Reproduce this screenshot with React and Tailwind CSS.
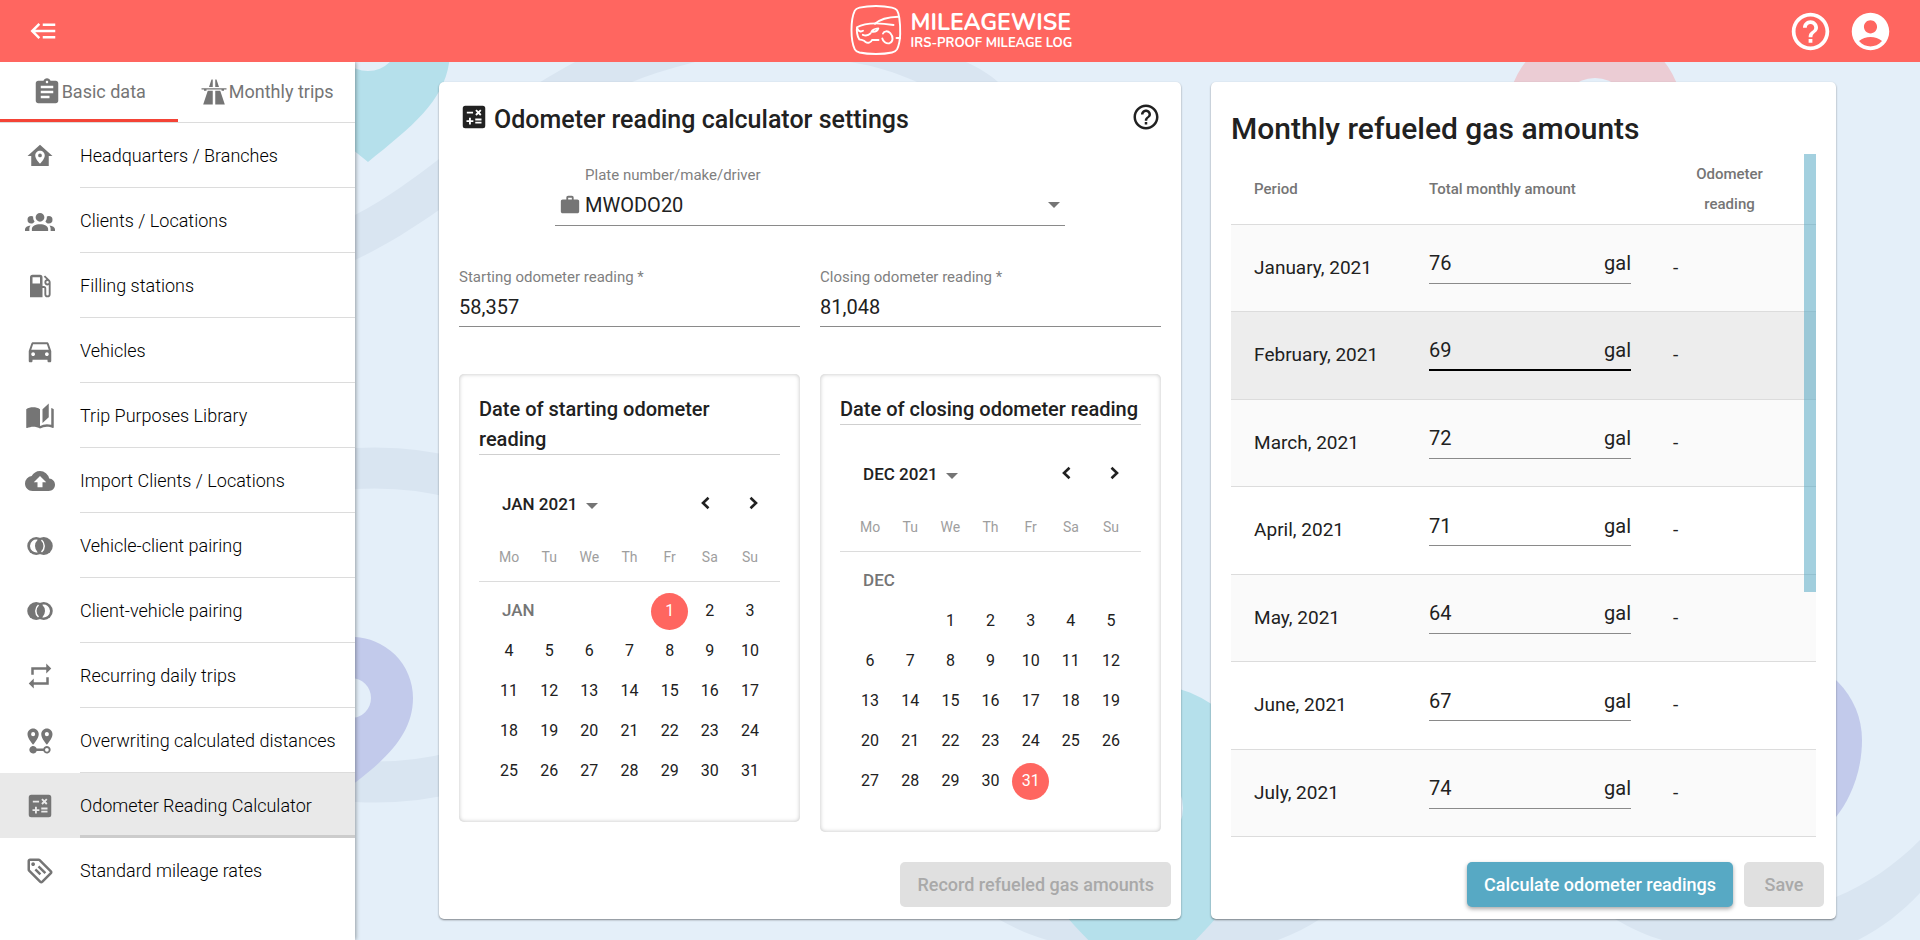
import React, { useState } from "react";
import {
  MdAccountCircle,
  MdAssignment,
  MdCloudUpload,
  MdDirectionsCar,
  MdHelpOutline,
  MdRepeat,
  MdWork,
} from "react-icons/md";

const PATHS = {
  backburger:
    "M5,13L9,17L7.6,18.42L1.18,12L7.6,5.58L9,7L5,11H21V13H5M21,6V8H11V6H21M21,16V18H11V16H21Z",
  highway:
    "M10,2L8,8H11V2H10M13,2V8H16L14,2H13M2,9V10H4V11H6V10H18L18.06,11H20V10H22V9H2M7,11L3.34,22H11V11H7M13,11V22H20.66L17,11H13Z",
  homePin:
    "M12,3L2,12H5V20H19V12H22L12,3M12,7.7C14.1,7.7 15.8,9.4 15.8,11.5C15.8,14.5 12,18 12,18C12,18 8.2,14.5 8.2,11.5C8.2,9.4 9.9,7.7 12,7.7M12,10A1.5,1.5 0 0,0 10.5,11.5A1.5,1.5 0 0,0 12,13A1.5,1.5 0 0,0 13.5,11.5A1.5,1.5 0 0,0 12,10Z",
  group:
    "M12,5.5A3.5,3.5 0 0,1 15.5,9A3.5,3.5 0 0,1 12,12.5A3.5,3.5 0 0,1 8.5,9A3.5,3.5 0 0,1 12,5.5M5,8C5.56,8 6.08,8.15 6.53,8.42C6.38,9.85 6.8,11.27 7.66,12.38C7.16,13.34 6.16,14 5,14A3,3 0 0,1 2,11A3,3 0 0,1 5,8M19,8A3,3 0 0,1 22,11A3,3 0 0,1 19,14C17.84,14 16.84,13.34 16.34,12.38C17.2,11.27 17.62,9.85 17.47,8.42C17.92,8.15 18.44,8 19,8M5.5,18.25C5.5,16.18 8.41,14.5 12,14.5C15.59,14.5 18.5,16.18 18.5,18.25V20H5.5V18.25M0,20V18.5C0,17.11 1.89,15.94 4.45,15.6C3.86,16.28 3.5,17.22 3.5,18.25V20H0M24,20H20.5V18.25C20.5,17.22 20.14,16.28 19.55,15.6C22.11,15.94 24,17.11 24,18.5V20Z",
  gas:
    "M18,10A1,1 0 0,1 17,9A1,1 0 0,1 18,8A1,1 0 0,1 19,9A1,1 0 0,1 18,10M12,10H6V5H12M19.77,7.23L19.78,7.22L16.06,3.5L15,4.56L17.11,6.67C16.17,7.03 15.5,7.93 15.5,9A2.5,2.5 0 0,0 18,11.5C18.36,11.5 18.69,11.42 19,11.29V18.5A1,1 0 0,1 18,19.5A1,1 0 0,1 17,18.5V14A2,2 0 0,0 15,12H14V5A2,2 0 0,0 12,3H6A2,2 0 0,0 4,5V21H14V13.5H15.5V18.5A2.5,2.5 0 0,0 18,21A2.5,2.5 0 0,0 20.5,18.5V9C20.5,8.31 20.22,7.68 19.77,7.23Z",
  book:
    "M19 2L14 6.5V17.5L19 13V2M6.5 5C4.55 5 2.45 5.4 1 6.5V21.16C1 21.41 1.25 21.66 1.5 21.66C1.6 21.66 1.65 21.59 1.75 21.59C3.1 20.94 5.05 20.5 6.5 20.5C8.45 20.5 10.55 20.9 12 22C13.35 21.15 15.8 20.5 17.5 20.5C19.15 20.5 20.85 20.81 22.25 21.56C22.35 21.61 22.4 21.59 22.5 21.59C22.75 21.59 23 21.34 23 21.09V6.5C22.4 6.05 21.75 5.75 21 5.5V19C19.9 18.65 18.7 18.5 17.5 18.5C15.8 18.5 13.35 19.15 12 20V6.5C10.55 5.4 8.45 5 6.5 5Z",
  pinDistance:
    "M6.5,8.11C5.61,8.11 4.89,7.39 4.89,6.5A1.61,1.61 0 0,1 6.5,4.89C7.39,4.89 8.11,5.61 8.11,6.5A1.61,1.61 0 0,1 6.5,8.11M6.5,2C4,2 2,4 2,6.5C2,9.87 6.5,14.86 6.5,14.86C6.5,14.86 11,9.87 11,6.5C11,4 9,2 6.5,2M17.5,8.11A1.61,1.61 0 0,1 15.89,6.5C15.89,5.61 16.61,4.89 17.5,4.89C18.39,4.89 19.11,5.61 19.11,6.5A1.61,1.61 0 0,1 17.5,8.11M17.5,2C15,2 13,4 13,6.5C13,9.87 17.5,14.86 17.5,14.86C17.5,14.86 22,9.87 22,6.5C22,4 20,2 17.5,2M17.5,16C16.23,16 15.1,16.8 14.68,18H9.32C8.77,16.44 7.05,15.62 5.5,16.17C3.93,16.72 3.11,18.44 3.66,20C4.22,21.56 5.93,22.38 7.5,21.83C8.35,21.53 9,20.85 9.32,20H14.69C15.24,21.56 16.96,22.38 18.5,21.83C20.08,21.28 20.9,19.56 20.35,18C19.92,16.8 18.78,16 17.5,16M17.5,20.5A1.5,1.5 0 0,1 16,19A1.5,1.5 0 0,1 17.5,17.5A1.5,1.5 0 0,1 19,19A1.5,1.5 0 0,1 17.5,20.5Z",
  calculator:
    "M19,3H5A2,2 0 0,0 3,5V19A2,2 0 0,0 5,21H19A2,2 0 0,0 21,19V5A2,2 0 0,0 19,3M13.03,7.06L14.09,6L15.5,7.41L16.91,6L17.97,7.06L16.56,8.47L17.97,9.88L16.91,10.94L15.5,9.53L14.09,10.94L13.03,9.88L14.44,8.47L13.03,7.06M6.25,7.72H11.25V9.22H6.25V7.72M11.5,16H9.5V18H8V16H6V14.5H8V12.5H9.5V14.5H11.5V16M18,17.25H13V15.75H18V17.25M18,14.75H13V13.25H18V14.75Z",
  tag:
    "M21.4 11.6L12.4 2.6C12 2.2 11.5 2 11 2H4C2.9 2 2 2.9 2 4V11C2 11.5 2.2 12 2.6 12.4L11.6 21.4C12 21.8 12.5 22 13 22C13.5 22 14 21.8 14.4 21.4L21.4 14.4C21.8 14 22 13.5 22 13C22 12.5 21.8 12 21.4 11.6M13 20L4 11V4H11L20 13M6.5 5C7.3 5 8 5.7 8 6.5S7.3 8 6.5 8 5 7.3 5 6.5 5.7 5 6.5 5M10.1 8.9L11.5 7.5L17 13L15.6 14.4L10.1 8.9M7.6 11.4L9 10L13 14L11.6 15.4L7.6 11.4Z",
};

function Icon({ name, className }) {
  return (
    <svg viewBox="0 0 24 24" fill="currentColor" className={className} aria-hidden="true">
      <path d={PATHS[name]} />
    </svg>
  );
}

function Chevron({ right }) {
  return (
    <svg viewBox="0 0 24 24" fill="none" stroke="currentColor" strokeWidth="2.6" className="size-6" aria-hidden="true">
      <path d={right ? "M9.5 6.8L15 12L9.5 17.2" : "M14.5 6.8L9 12L14.5 17.2"} />
    </svg>
  );
}

function PairIcon({ flip, className }) {
  return (
    <svg viewBox="0 0 24 24" className={className} aria-hidden="true">
      <g transform={flip ? "matrix(-1 0 0 1 24 0)" : undefined}>
        <g fill="currentColor">
          <circle cx="9" cy="12" r="7.2" />
          <circle cx="15" cy="12" r="7.2" />
        </g>
        <path d="M10.2,6.9A5.2,5.2 0 1 0 10.2,17.1A7,7 0 0 1 10.2,6.9Z" fill="#fff" />
        <path d="M13.2,7.2A6.4,6.4 0 0 1 13.2,16.8" fill="none" stroke="#fff" strokeWidth="1.2" />
      </g>
    </svg>
  );
}

function Caret({ className }) {
  return (
    <svg viewBox="0 0 12 6" fill="currentColor" className={className} aria-hidden="true">
      <path d="M0 0H12L6 6Z" />
    </svg>
  );
}

const NAV = [
  { label: "Headquarters / Branches", icon: <Icon name="homePin" className="size-[30px]" /> },
  { label: "Clients / Locations", icon: <Icon name="group" className="size-[30px]" /> },
  { label: "Filling stations", icon: <Icon name="gas" className="size-[30px]" /> },
  { label: "Vehicles", icon: <MdDirectionsCar className="size-[30px]" /> },
  { label: "Trip Purposes Library", icon: <Icon name="book" className="size-[30px]" /> },
  { label: "Import Clients / Locations", icon: <MdCloudUpload className="size-[30px]" /> },
  { label: "Vehicle-client pairing", icon: <PairIcon className="size-[30px]" /> },
  { label: "Client-vehicle pairing", icon: <PairIcon flip className="size-[30px]" /> },
  { label: "Recurring daily trips", icon: <MdRepeat className="size-[30px]" /> },
  { label: "Overwriting calculated distances", icon: <Icon name="pinDistance" className="size-[30px]" /> },
  { label: "Odometer Reading Calculator", icon: <Icon name="calculator" className="size-[30px]" />, active: true },
  { label: "Standard mileage rates", icon: <Icon name="tag" className="size-[30px]" />, last: true },
];

function Logo() {
  return (
    <a href="#home" className="flex items-center gap-[9px] text-white">
      <svg viewBox="0 0 52 52" fill="none" stroke="currentColor" strokeWidth="1.9" strokeLinecap="round" strokeLinejoin="round" className="size-[52px]" aria-hidden="true">
        <path d="M49.3 13C48.8 9.5 48.2 7.2 47 5.3C46 3.9 44.5 3.3 42 2.7C37 1.5 31.5 1 26 1S14.5 1.5 9.5 2.7C7.2 3.3 5.7 3.9 4.8 5.6C2.8 9.7 1.5 16.5 1.5 25S2.8 40.3 4.8 44.4C5.7 46.2 7.2 46.9 9.5 47.5C14.5 48.6 20.5 49 26 49S37 48.6 42 47.5C44.5 46.9 46 46.2 47 44.4C49 40.4 50 35 50.2 29C50.3 23 50 17.5 49.3 13" />
        <path d="M48.5 11.7C39 12 31 13 25 18.8M50 33H46.5" />
        <path d="M7 22.3C16 17 29 17.6 43.5 20M7 22.3C6.5 25 7 31.5 9.3 34.3C11.5 35.3 14 34.6 15.5 37C17.5 38.4 21 38 22 35H28.5" />
        <path d="M7.5 23.8C8.5 26.5 11 27 13 25.8M12.8 29.8C16 31 18.5 30.5 20.5 28.3M21.5 26.7C22.7 24.3 25.5 23.6 28.3 23.4C27.5 26 25 27.2 21.5 26.7Z" />
        <path d="M33 28.5C34 25.8 37.8 25.5 40.3 28.2C43.5 31.7 43.3 37 39.5 38.2C36 39 33 36.5 32.3 33.5" />
      </svg>
      <span className="flex flex-col font-['Nunito','Lato','Open_Sans',sans-serif] whitespace-nowrap">
        <span className="text-[23px] leading-6 font-bold">MILEAGEWISE</span>
        <span className="text-[13px] leading-4 font-bold">IRS-PROOF MILEAGE LOG</span>
      </span>
    </a>
  );
}

function Header() {
  return (
    <header className="relative z-20 flex h-[62px] shrink-0 items-center justify-between bg-[#ff6660] pr-[27px] pl-[29px] text-white">
      <div className="flex flex-1">
        <button type="button" aria-label="Collapse menu">
          <Icon name="backburger" className="size-[30px]" />
        </button>
      </div>
      <Logo />
      <div className="flex flex-1 justify-end gap-[15px]">
        <button type="button" aria-label="Help">
          <MdHelpOutline className="size-[45px]" />
        </button>
        <button type="button" aria-label="Account">
          <MdAccountCircle className="size-[45px]" />
        </button>
      </div>
    </header>
  );
}

function Sidebar() {
  return (
    <aside className="relative z-10 w-[355px] shrink-0 bg-white shadow-[1px_0_4px_rgba(0,0,0,0.35)]">
      <div role="tablist" className="flex h-[61px] border-b border-[#dcdcdc] text-[18px] text-[#757575]">
        <button type="button" role="tab" aria-selected="true" className="flex flex-1 items-center justify-center border-b-[3px] border-[#f44336] pt-0.5 whitespace-nowrap">
          <MdAssignment className="size-[30px]" />
          Basic data
        </button>
        <button type="button" role="tab" aria-selected="false" className="flex flex-1 items-center justify-center border-b-[3px] border-transparent pt-0.5 whitespace-nowrap">
          <Icon name="highway" className="size-[30px]" />
          Monthly trips
        </button>
      </div>
      <nav>
        <ul>
          {NAV.map((item) => (
            <li key={item.label}>
              <a
                href="#section"
                className={
                  item.active
                    ? "flex h-[65px] items-center bg-[#e9e9e9] pl-[25px]"
                    : "flex h-[65px] items-center pl-[25px]"
                }
              >
                <span className="w-[55px] text-[#757575]">{item.icon}</span>
                <span
                  className={
                    item.active
                      ? "flex h-full flex-1 items-center border-b-[3px] border-[#cccccc] pt-0.5 text-[18px] font-light whitespace-nowrap text-black"
                      : item.last
                        ? "flex h-full flex-1 items-center text-[18px] font-light whitespace-nowrap text-black"
                        : "flex h-full flex-1 items-center border-b border-[#dcdcdc] text-[18px] font-light whitespace-nowrap text-black"
                  }
                >
                  {item.label}
                </span>
              </a>
            </li>
          ))}
        </ul>
      </nav>
    </aside>
  );
}

function Backdrop() {
  return (
    <svg viewBox="355 62 1565 878" preserveAspectRatio="xMidYMid slice" className="absolute inset-0 h-full w-full" aria-hidden="true">
      <rect x="355" y="62" width="1565" height="878" fill="#e4eff9" />
      <g fill="#d9e5f1">
        <path d="M355 215C388 198 414 178 439 159C475 130 505 100 575 62H695C640 76 610 90 575 110C520 150 475 192 439 210C410 230 385 246 355 260Z" />
        <path d="M850 62C876 66 897 73 917 82H998C989 74 979 68 966 62Z" />
        <path d="M960 890C975 905 985 912 998 919C1014 928 1030 935 1047 940H1278C1294 934 1308 927 1320 919L1340 890Z" />
        <path d="M1590 900L1615 919C1632 929 1648 936 1662 940H1858C1882 928 1902 912 1920 893V840C1894 866 1867 884 1836 897Z" />
      </g>
      <ellipse cx="375" cy="625" rx="230" ry="157" fill="none" stroke="#d9e5f1" strokeWidth="41" />
      <path fill="#b5e0eb" fillRule="evenodd" d="M368 162C330 132 286 95 286 45A82 82 0 0 1 450 50C450 97 415 124 368 162ZM368 9A31 31 0 1 0 368 71A31 31 0 1 0 368 9Z" />
      <path fill="#c2caeb" fillRule="evenodd" d="M352 785C325 764 291 735 291 698A61 61 0 0 1 413 698C413 733 388 758 352 785ZM351 678A20 20 0 1 0 351 718A20 20 0 1 0 351 678Z" />
      <path fill="#b5e0eb" fillRule="evenodd" d="M1142 992C1085 937 1017 880 1017 808A125 125 0 0 1 1267 808C1267 880 1199 937 1142 992ZM1142 767A41 41 0 1 0 1142 849A41 41 0 1 0 1142 767Z" />
      <path fill="#ebccd4" fillRule="evenodd" d="M1595 240C1560 210 1507 160 1507 116A88 88 0 0 1 1683 116C1683 160 1630 210 1595 240ZM1595 78A36 36 0 1 0 1595 150A36 36 0 1 0 1595 78Z" />
      <path fill="#c2caeb" d="M1780 865C1740 833 1698 790 1698 740A82 82 0 0 1 1862 740C1862 775 1848 802 1836 817C1820 835 1800 850 1780 865Z" />
    </svg>
  );
}

function OdometerField({ id, label, value, onChange }) {
  return (
    <div className="flex flex-col">
      <label htmlFor={id} className="text-[15px] leading-5 text-[#7f7f7f]">
        {label}
      </label>
      <input
        id={id}
        value={value}
        onChange={(e) => onChange(e.target.value)}
        className="h-10 w-full border-b border-[#8a8a8a] bg-transparent text-[20px] outline-none"
      />
    </div>
  );
}

const WEEKDAYS = ["Mo", "Tu", "We", "Th", "Fr", "Sa", "Su"];

function Calendar({ title, month, year, offset, selected }) {
  const days = Array.from({ length: 31 }, (_, i) => i + 1);
  const labelInFirstRow = offset >= 3;
  return (
    <section className="rounded-[5px] p-5 pb-[31px] shadow-[inset_0_0_4px_rgba(0,0,0,0.25)]">
      <h2 className="border-b border-[#cfcfcf] text-[20px] leading-[30px] font-medium">{title}</h2>
      <div className="flex h-[60px] items-end justify-between pr-[15px] pl-[23px] text-[17px] font-medium">
        <button type="button" className="flex h-5 items-center gap-2">
          {month} {year}
          <Caret className="mt-0.5 h-1.5 w-3 text-[#757575]" />
        </button>
        <span className="flex gap-[23px]">
          <button type="button" aria-label="Previous month">
            <Chevron />
          </button>
          <button type="button" aria-label="Next month">
            <Chevron right />
          </button>
        </span>
      </div>
      <div className="mt-[31px] grid h-[36px] grid-cols-7 border-b border-[#dcdcdc] px-2.5 text-center text-[14px] leading-[22px] text-[#9e9e9e]">
        {WEEKDAYS.map((d) => (
          <span key={d}>{d}</span>
        ))}
      </div>
      <div className="mt-[9px] grid auto-rows-[40px] grid-cols-7 px-2.5 text-[16px]">
        <span
          className={
            labelInFirstRow
              ? "col-span-4 flex items-center pl-[13px] text-[17px] font-medium text-[#757575]"
              : "col-span-7 flex items-center pl-[13px] text-[17px] font-medium text-[#757575]"
          }
        >
          {month}
        </span>
        {!labelInFirstRow && <span className="col-span-2" />}
        {days.map((d) => (
          <button
            key={d}
            type="button"
            className={
              d === selected
                ? "m-auto size-[37px] rounded-full bg-[#ff6660] text-white"
                : "m-auto size-[37px] rounded-full"
            }
          >
            {d}
          </button>
        ))}
      </div>
    </section>
  );
}

function SettingsCard() {
  const [start, setStart] = useState("58,357");
  const [close, setClose] = useState("81,048");
  return (
    <section className="flex flex-col rounded-[5px] bg-white pt-5 shadow-[0_1px_2px_rgba(0,0,0,0.45)]">
      <div className="flex flex-1 flex-col px-5">
        <div className="flex h-[30px] items-center">
          <Icon name="calculator" className="size-[30px]" />
          <h1 className="ml-[5px] flex-1 pt-[6px] text-[25px] leading-[30px] font-medium">Odometer reading calculator settings</h1>
          <button type="button" aria-label="Help">
            <MdHelpOutline className="size-[30px]" />
          </button>
        </div>
        <div className="mx-auto mt-[33px] flex w-full max-w-[510px] flex-col border-b border-[#8a8a8a]">
          <label htmlFor="plate" className="pl-[30px] text-[15px] leading-5 text-[#7f7f7f]">
            Plate number/make/driver
          </label>
          <div className="flex h-10 items-center pl-1">
            <MdWork className="size-[22px] text-[#757575]" />
            <select id="plate" className="h-full flex-1 appearance-none bg-transparent pl-1 text-[20px] outline-none">
              <option>MWODO20</option>
            </select>
            <Caret className="mr-[5px] h-1.5 w-3 text-[#757575]" />
          </div>
        </div>
        <div className="mt-[41px] grid grid-cols-2 gap-5">
          <OdometerField id="start" label="Starting odometer reading *" value={start} onChange={setStart} />
          <OdometerField id="close" label="Closing odometer reading *" value={close} onChange={setClose} />
        </div>
        <div className="mt-[47px] grid grid-cols-2 items-start gap-5">
          <Calendar title="Date of starting odometer reading" month="JAN" year="2021" offset={4} selected={1} />
          <Calendar title="Date of closing odometer reading" month="DEC" year="2021" offset={2} selected={31} />
        </div>
      </div>
      <div className="flex justify-end px-2.5 pb-3">
        <button type="button" disabled className="h-[45px] rounded-[5px] bg-[#e0e0e0] px-[17px] text-[18px] font-medium text-[#a9a9a9]">
          Record refueled gas amounts
        </button>
      </div>
    </section>
  );
}

const MONTHS = [
  ["January, 2021", "76"],
  ["February, 2021", "69"],
  ["March, 2021", "72"],
  ["April, 2021", "71"],
  ["May, 2021", "64"],
  ["June, 2021", "67"],
  ["July, 2021", "74"],
];

function AmountsCard() {
  const [amounts, setAmounts] = useState(MONTHS.map((m) => m[1]));
  return (
    <section className="flex flex-col rounded-[5px] bg-white pt-5 shadow-[0_1px_2px_rgba(0,0,0,0.45)]">
      <div className="flex-1 px-5">
        <h2 className="h-[52px] text-[30px] leading-[54px] font-medium">Monthly refueled gas amounts</h2>
        <div className="relative">
          <table className="h-[683px] w-full table-fixed border-collapse text-left">
            <colgroup>
              <col className="w-[198px]" />
              <col className="w-[244px]" />
              <col />
            </colgroup>
            <thead>
              <tr className="h-[70px] border-b border-[#dcdcdc] text-[15px] leading-[30px] text-[#757575]">
                <th className="pl-[23px] font-medium">Period</th>
                <th className="font-medium">Total monthly amount</th>
                <th className="pr-[30px] text-center font-medium">
                  Odometer
                  <br />
                  reading
                </th>
              </tr>
            </thead>
            <tbody className="text-[19px]">
              {MONTHS.map(([name], i) => (
                <tr
                  key={name}
                  className={
                    i === 1
                      ? "border-b border-[#dcdcdc] bg-[#ededed]"
                      : i % 2 === 0
                        ? "border-b border-[#dcdcdc] bg-[#fafafa]"
                        : "border-b border-[#dcdcdc]"
                  }
                >
                  <td className="pl-[23px] whitespace-nowrap">{name}</td>
                  <td className="pr-[42px] pb-2">
                    <span
                      className={
                        i === 1
                          ? "flex h-10 items-center border-b-2 border-black text-[20px]"
                          : "flex h-10 items-center border-b border-[#8a8a8a] text-[20px]"
                      }
                    >
                      <input
                        aria-label={name + " amount"}
                        value={amounts[i]}
                        onChange={(e) => setAmounts(amounts.map((a, j) => (j === i ? e.target.value : a)))}
                        className="w-full min-w-0 flex-1 bg-transparent outline-none"
                      />
                      gal
                    </span>
                  </td>
                  <td>-</td>
                </tr>
              ))}
            </tbody>
          </table>
          <div className="absolute top-0 right-0 h-[438px] w-3 bg-[#57a9c4]/55" />
        </div>
      </div>
      <div className="flex justify-end gap-[11px] px-3 pb-3">
        <button type="button" className="h-[45px] rounded-[5px] bg-[#57a9c4] px-[17px] text-[18px] font-medium text-white shadow-[0_2px_4px_rgba(0,0,0,0.35)]">
          Calculate odometer readings
        </button>
        <button type="button" disabled className="h-[45px] min-w-[80px] rounded-[5px] bg-[#e0e0e0] px-[17px] text-[18px] font-medium text-[#a9a9a9]">
          Save
        </button>
      </div>
    </section>
  );
}

export default function App() {
  return (
    <div className="flex min-h-screen flex-col bg-[#e4eff9] font-['Roboto',sans-serif] text-[#212121]">
      <Header />
      <div className="flex flex-1">
        <Sidebar />
        <main className="relative flex flex-1">
          <Backdrop />
          <div className="relative grid flex-1 grid-cols-[minmax(0,19fr)_minmax(0,16fr)] gap-[30px] px-[84px] pt-5 pb-[21px]">
            <SettingsCard />
            <AmountsCard />
          </div>
        </main>
      </div>
    </div>
  );
}
